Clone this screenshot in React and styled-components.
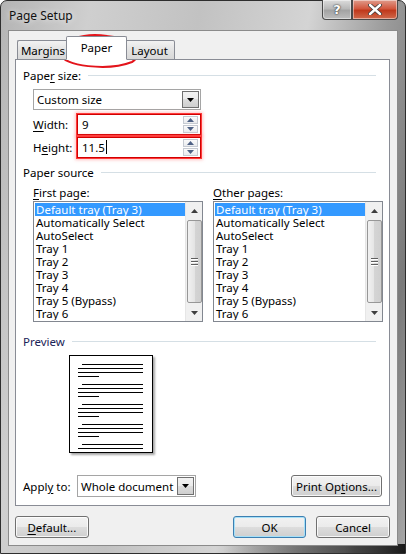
import React from 'react';
import styled, { createGlobalStyle } from 'styled-components';

const GlobalStyle = createGlobalStyle`
  html, body {
    margin: 0;
    padding: 0;
    overflow: hidden;
    background: #ffffff;
  }
  * {
    box-sizing: border-box;
  }
`;

const UI_FONT = `"Noto Sans", "Open Sans", "DejaVu Sans", sans-serif`;

const Window = styled.div`
  position: relative;
  width: 406px;
  height: 554px;
  border: 1px solid #2e2e2e;
  border-radius: 7px 7px 0 0;
  padding: 0 7px 7px;
  display: flex;
  flex-direction: column;
  font-family: ${UI_FONT};
  font-size: 11.5px;
  color: #000;
  background:
    linear-gradient(90deg, rgba(0, 0, 0, 0) 55%, rgba(40, 40, 40, 0.55) 85%, rgba(10, 10, 10, 0.9) 100%) bottom / 100% 9px no-repeat,
    linear-gradient(100deg, #b4b4b4 0%, #cfcfcf 18%, #c2c2c2 40%, #d4d4d4 62%, #9a9a9a 78%, #7a7a7a 90%, #a8a8a8 100%);
`;

const TitleBar = styled.div`
  height: 29px;
  display: flex;
  align-items: flex-start;
  padding-left: 1px;
`;

const Title = styled.div`
  margin-top: 6px;
  font-size: 12px;
  color: #111;
  text-shadow: 0 0 6px rgba(255, 255, 255, 0.9);
`;

const CaptionButtons = styled.div`
  margin-left: auto;
  display: flex;
  margin-top: -1px;
`;

const CaptionButton = styled.div`
  width: ${p => p.$w}px;
  height: 20px;
  display: flex;
  align-items: center;
  justify-content: center;
  border: 1px solid #4a4a4a;
  border-top: none;
  border-radius: ${p => p.$radius};
  color: #fff;
  font-weight: bold;
  font-size: 14px;
  background: ${p =>
    p.$close
      ? 'linear-gradient(#e09c8c 0%, #d2583f 45%, #c0391c 55%, #d06a4c 100%)'
      : 'linear-gradient(#dcdcdc 0%, #b9b9b9 45%, #a3a3a3 55%, #bdbdbd 100%)'};
  box-shadow: inset 0 0 0 1px rgba(255, 255, 255, 0.45);
`;

const HelpGlyph = styled.span`
  font-family: "DejaVu Sans", sans-serif;
  font-size: 13px;
  font-weight: bold;
  color: #fff;
  text-shadow: 0 0 1px #333, 0 0 2px #333;
`;

const Client = styled.div`
  flex: 1;
  background: #f0f0f0;
  border: 1px solid #8b8b8b;
  padding: 5px 0 0 6px;
  display: flex;
  flex-direction: column;
`;

const TabStrip = styled.div`
  display: flex;
  align-items: flex-end;
  height: 24px;
  padding-left: 2px;
  position: relative;
  z-index: 1;
`;

const Tab = styled.div`
  height: ${p => (p.$active ? 24 : 20)}px;
  width: ${p => p.$w}px;
  margin: 0 ${p => (p.$active ? -2 : 0)}px;
  border: 1px solid #898c95;
  border-bottom: ${p => (p.$active ? '1px solid #fff' : '1px solid #898c95')};
  border-right: ${p => (p.$last || p.$active ? '1px solid #898c95' : 'none')};
  border-left: ${p => (p.$afterActive ? 'none' : '1px solid #898c95')};
  border-radius: 2px 2px 0 0;
  background: ${p => (p.$active ? '#fff' : 'linear-gradient(#f2f2f2, #e3e3e3 50%, #d8d8d8)')};
  display: flex;
  align-items: center;
  justify-content: center;
  padding-bottom: ${p => (p.$active ? 2 : 0)}px;
  position: relative;
  z-index: ${p => (p.$active ? 2 : 1)};
`;

const Panel = styled.div`
  width: 375px;
  margin-top: -1px;
  background: #fff;
  border: 1px solid #898c95;
  padding: 8px 7px 8px 7px;
  display: flex;
  flex-direction: column;
`;

const GroupHeading = styled.div`
  height: 15px;
  display: flex;
  align-items: center;
  gap: 7px;
  margin-top: ${p => p.$mt || 0}px;
  color: ${p => (p.$accent ? '#1a2358' : '#000')};

  &::after {
    content: '';
    flex: 1;
    height: 1px;
    background: #d5dfe5;
    margin-right: ${p => p.$lineEnd || 0}px;
  }
`;

const Indented = styled.div`
  margin-left: 10px;
  margin-top: ${p => p.$mt || 0}px;
  display: flex;
  flex-direction: column;
`;

const Combo = styled.div`
  width: ${p => p.$w}px;
  height: ${p => p.$h}px;
  border: 1px solid #a5a5a5;
  background: #fff;
  display: flex;
  align-items: stretch;
`;

const ComboText = styled.div`
  flex: 1;
  padding-left: 3px;
  display: flex;
  align-items: center;
`;

const DropButton = styled.div`
  width: 17px;
  margin: 1px;
  border: 1px solid #707070;
  background: linear-gradient(#f2f2f2, #ebebeb 50%, #dddddd 50%, #cfcfcf);
  display: flex;
  align-items: center;
  justify-content: center;
`;

const FieldRow = styled.div`
  display: flex;
  align-items: center;
  height: 20px;
  margin-top: ${p => p.$mt}px;
`;

const FieldLabel = styled.div`
  width: 44px;
`;

const SpinInput = styled.div`
  width: 124px;
  height: 21px;
  border: 1px solid #d00000;
  box-shadow: 0 0 0 1px #ff3a3a, 0 0 3px 2px rgba(255, 90, 90, 0.35);
  background: #fff;
  display: flex;
  align-items: stretch;
`;

const SpinValue = styled.div`
  flex: 1;
  padding-left: 4px;
  display: flex;
  align-items: center;
`;

const Caret = styled.span`
  display: inline-block;
  width: 1px;
  height: 14px;
  background: #000;
  margin-left: 1px;
`;

const SpinButtons = styled.div`
  width: 15px;
  margin: 1px 2px 1px 0;
  display: flex;
  flex-direction: column;
  gap: 1px;
`;

const SpinHalf = styled.div`
  flex: 1;
  border: 1px solid #c6cbd2;
  background: linear-gradient(#fbfbfb, #e9ebee);
  display: flex;
  align-items: center;
  justify-content: center;
`;

const Columns = styled.div`
  display: flex;
  gap: 10px;
  margin-top: 5px;
`;

const Column = styled.div`
  display: flex;
  flex-direction: column;
`;

const ListLabel = styled.div`
  height: 15px;
  line-height: 15px;
  margin-bottom: 1px;
`;

const ListBox = styled.div`
  width: 170px;
  height: 121px;
  border: 1px solid #828790;
  background: #fff;
  display: flex;
  padding: 1px 0 1px 1px;
`;

const ListItems = styled.div`
  flex: 1;
  overflow: hidden;
`;

const ListItem = styled.div`
  height: 13px;
  line-height: 13px;
  padding-left: 1px;
  white-space: nowrap;
  background: ${p => (p.$selected ? '#3399ff' : 'transparent')};
  color: ${p => (p.$selected ? '#fff' : '#000')};
`;

const ScrollBar = styled.div`
  width: 17px;
  margin-top: -1px;
  margin-bottom: -1px;
  background: #f0f0f0;
  border-left: 1px solid #e6e6e6;
  display: flex;
  flex-direction: column;
  align-items: center;
`;

const ScrollArrow = styled.div`
  height: 17px;
  width: 100%;
  display: flex;
  align-items: center;
  justify-content: center;
`;

const ScrollThumb = styled.div`
  width: 15px;
  flex: 1;
  border: 1px solid #979797;
  border-radius: 2px;
  background: linear-gradient(90deg, #f1f1f1, #e4e4e4 50%, #d4d4d4 50%, #cfcfcf);
  display: flex;
  flex-direction: column;
  align-items: center;
  justify-content: center;
  gap: 2px;
  margin: 1px 0;
`;

const Grip = styled.div`
  width: 7px;
  height: 1px;
  background: #5f5f5f;
  box-shadow: 0 1px 0 #fff;
`;

const PreviewPage = styled.div`
  width: 84px;
  height: 98px;
  margin-left: 46px;
  margin-top: 6px;
  border: 1px solid #000;
  background: #fff;
  box-shadow: 2px 2px 2px rgba(0, 0, 0, 0.35);
  overflow: hidden;
  padding: 8px 8px 0 8px;
  display: flex;
  flex-direction: column;
  gap: 7px;
`;

const Paragraph = styled.div`
  display: flex;
  flex-direction: column;
  gap: 3px;
`;

const TextLine = styled.div`
  height: 1px;
  background: #000;
  width: ${p => p.$w}px;
  margin-left: ${p => p.$indent || 0}px;
`;

const ApplyRow = styled.div`
  display: flex;
  align-items: center;
  height: 22px;
  margin-top: 22px;
`;

const ApplyLabel = styled.div`
  width: 54px;
`;

const PushButton = styled.div`
  width: ${p => p.$w}px;
  height: 22px;
  border: 1px solid ${p => (p.$default ? '#3c7fb1' : '#707070')};
  border-radius: 3px;
  background: linear-gradient(#f2f2f2, #ebebeb 50%, #dddddd 50%, #cfcfcf);
  box-shadow: inset 0 0 0 1px ${p => (p.$default ? '#a6e0f8' : 'rgba(255, 255, 255, 0.8)')};
  display: flex;
  align-items: center;
  justify-content: center;
  margin-left: ${p => p.$ml || 0}px;
`;

const ButtonRow = styled.div`
  display: flex;
  margin-top: 10px;
  width: 375px;
`;

const Key = styled.span`
  text-decoration: underline;
  text-underline-offset: 2px;
`;

const Annotation = styled.svg`
  position: absolute;
  left: 0;
  top: 0;
  pointer-events: none;
`;

function Triangle({ up, color = '#000', w = 7, h = 4 }) {
  return (
    <svg width={w} height={h} viewBox={`0 0 ${w} ${h}`}>
      {up ? (
        <polygon points={`0,${h} ${w},${h} ${w / 2},0`} fill={color} />
      ) : (
        <polygon points={`0,0 ${w},0 ${w / 2},${h}`} fill={color} />
      )}
    </svg>
  );
}

function CloseIcon() {
  return (
    <svg width="14" height="11" viewBox="0 0 14 11">
      <path
        d="M2 1 L12 10 M12 1 L2 10"
        stroke="#3a3a3a"
        strokeWidth="4"
        strokeLinecap="round"
      />
      <path
        d="M2 1 L12 10 M12 1 L2 10"
        stroke="#fff"
        strokeWidth="2.4"
        strokeLinecap="round"
      />
    </svg>
  );
}

const trays = [
  'Default tray (Tray 3)',
  'Automatically Select',
  'AutoSelect',
  'Tray 1',
  'Tray 2',
  'Tray 3',
  'Tray 4',
  'Tray 5 (Bypass)',
  'Tray 6'
];

function TrayList() {
  return (
    <ListBox>
      <ListItems>
        {trays.map((tray, i) => (
          <ListItem key={tray} $selected={i === 0}>
            {tray}
          </ListItem>
        ))}
      </ListItems>
      <ScrollBar>
        <ScrollArrow>
          <Triangle up color="#3e3e3e" w={7} h={4} />
        </ScrollArrow>
        <ScrollThumb>
          <Grip />
          <Grip />
          <Grip />
        </ScrollThumb>
        <ScrollArrow>
          <Triangle color="#3e3e3e" w={7} h={4} />
        </ScrollArrow>
      </ScrollBar>
    </ListBox>
  );
}

function Spinner() {
  return (
    <SpinButtons>
      <SpinHalf>
        <Triangle up color="#4d6185" w={7} h={4} />
      </SpinHalf>
      <SpinHalf>
        <Triangle color="#4d6185" w={7} h={4} />
      </SpinHalf>
    </SpinButtons>
  );
}

function Page() {
  return (
    <PreviewPage>
      {[0, 1, 2, 3, 4].map(i => (
        <Paragraph key={i}>
          <TextLine $w={61} $indent={4} />
          <TextLine $w={65} />
          <TextLine $w={65} />
          <TextLine $w={21} />
        </Paragraph>
      ))}
    </PreviewPage>
  );
}

export default function App() {
  return (
    <>
      <GlobalStyle />
      <Window>
        <TitleBar>
          <Title>Page Setup</Title>
          <CaptionButtons>
            <CaptionButton $w={30} $radius="0 0 0 4px">
              <HelpGlyph>?</HelpGlyph>
            </CaptionButton>
            <CaptionButton $w={46} $close $radius="0 0 4px 0">
              <CloseIcon />
            </CaptionButton>
          </CaptionButtons>
        </TitleBar>

        <Client>
          <TabStrip>
            <Tab $w={51}>Margins</Tab>
            <Tab $w={61} $active>Paper</Tab>
            <Tab $w={50} $last $afterActive>Layout</Tab>
          </TabStrip>

          <Panel>
            <GroupHeading $lineEnd={6}>
              <span>
                Pape<Key>r</Key> size:
              </span>
            </GroupHeading>
            <Indented $mt={6}>
              <Combo $w={168} $h={21}>
                <ComboText>Custom size</ComboText>
                <DropButton>
                  <Triangle />
                </DropButton>
              </Combo>
              <FieldRow $mt={4}>
                <FieldLabel>
                  <Key>W</Key>idth:
                </FieldLabel>
                <SpinInput>
                  <SpinValue>9</SpinValue>
                  <Spinner />
                </SpinInput>
              </FieldRow>
              <FieldRow $mt={3}>
                <FieldLabel>
                  H<Key>e</Key>ight:
                </FieldLabel>
                <SpinInput>
                  <SpinValue>
                    11.5<Caret />
                  </SpinValue>
                  <Spinner />
                </SpinInput>
              </FieldRow>
            </Indented>

            <GroupHeading $mt={8} $lineEnd={6}>
              <span>Paper source</span>
            </GroupHeading>
            <Indented>
              <Columns>
                <Column>
                  <ListLabel>
                    <Key>F</Key>irst page:
                  </ListLabel>
                  <TrayList />
                </Column>
                <Column>
                  <ListLabel>
                    <Key>O</Key>ther pages:
                  </ListLabel>
                  <TrayList />
                </Column>
              </Columns>
            </Indented>

            <GroupHeading $mt={12} $lineEnd={6} $accent>
              <span>Preview</span>
            </GroupHeading>
            <Page />

            <ApplyRow>
              <ApplyLabel>
                Appl<Key>y</Key> to:
              </ApplyLabel>
              <Combo $w={119} $h={22}>
                <ComboText>Whole document</ComboText>
                <DropButton>
                  <Triangle />
                </DropButton>
              </Combo>
              <PushButton $w={91} $ml={95}>
                Print Op<Key>t</Key>ions...
              </PushButton>
            </ApplyRow>
          </Panel>

          <ButtonRow>
            <PushButton $w={74}>
              <Key>D</Key>efault...
            </PushButton>
            <PushButton $w={74} $ml={144} $default>
              OK
            </PushButton>
            <PushButton $w={74} $ml={10}>
              Cancel
            </PushButton>
          </ButtonRow>
        </Client>

        <Annotation width="406" height="554" viewBox="0 0 406 554">
          <path
            d="M106 35 C 82 31, 58 40, 59 52 C 61 66, 108 70, 131 61 C 142 55, 135 40, 113 36 C 101 34, 92 35, 85 39"
            fill="none"
            stroke="#e3141b"
            strokeWidth="2"
            strokeLinecap="round"
          />
        </Annotation>
      </Window>
    </>
  );
}
